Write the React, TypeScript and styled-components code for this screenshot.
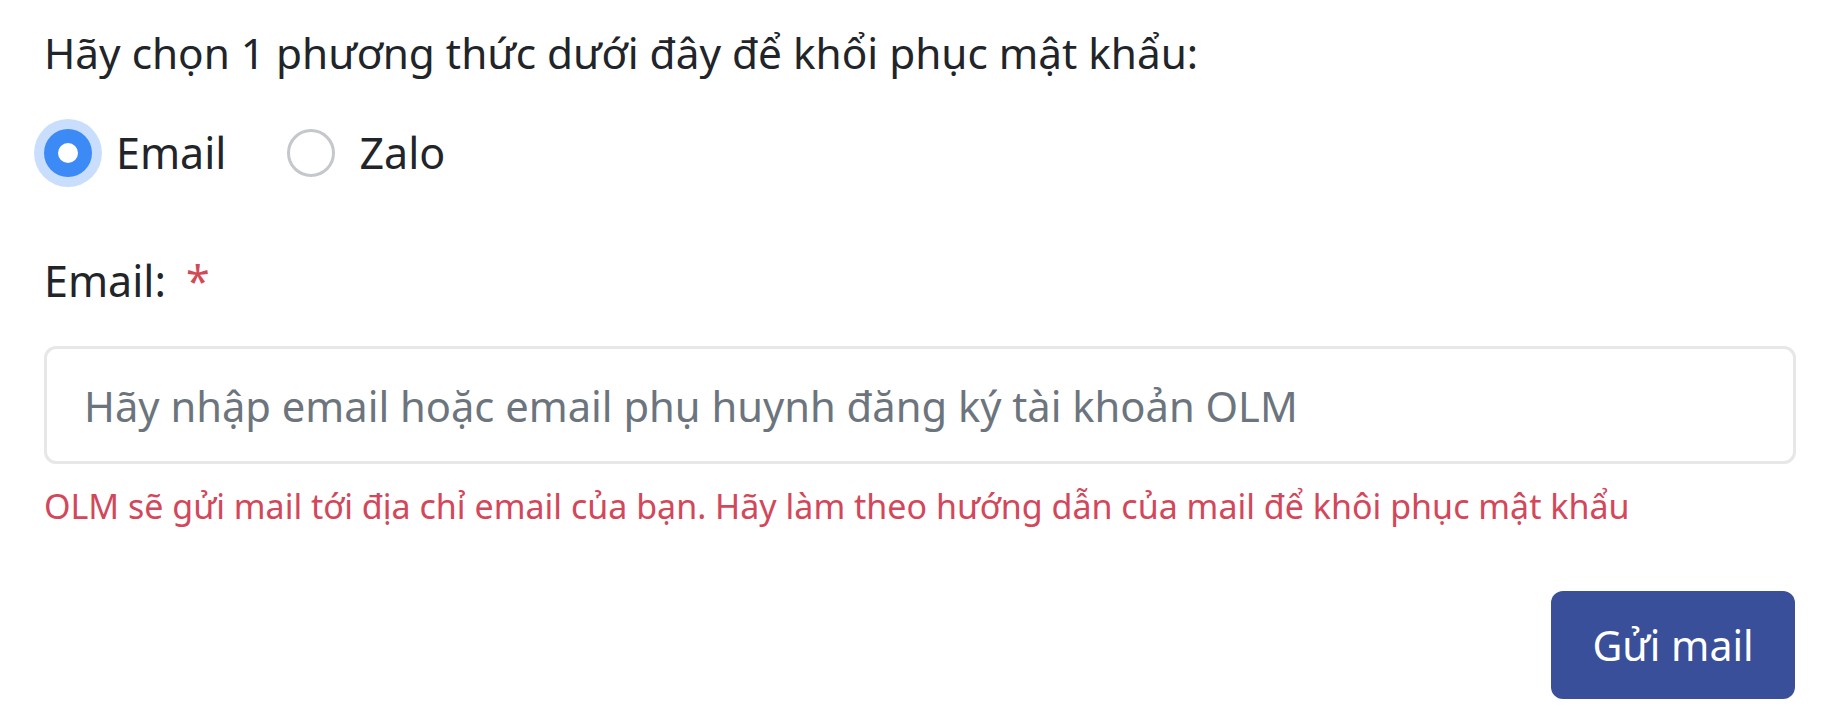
import React from "react";
import styled, { createGlobalStyle } from "styled-components";

const GlobalStyle = createGlobalStyle`
  html, body { margin: 0; padding: 0; background: #ffffff; }
  body {
    font-family: "Noto Sans", "Open Sans", sans-serif;
    color: #212529;
  }
  * { box-sizing: border-box; }
`;

const Wrapper = styled.div`
  padding: 18px 42px 0 44px;
  display: flex;
  flex-direction: column;
`;

const Prompt = styled.p`
  margin: 0;
  font-size: 42.3px;
  line-height: 69px;
  color: #212529;
`;

const RadioGroup = styled.div`
  display: flex;
  align-items: center;
  gap: 61px;
  margin-top: 31px;
  height: 69px;
`;

const RadioOption = styled.label`
  display: flex;
  align-items: center;
  gap: 24px;
  font-size: 43px;
  line-height: 69px;
  color: #212529;
  cursor: pointer;
`;

const RadioCircle = styled.span<{ $checked?: boolean }>`
  width: 48px;
  height: 48px;
  border-radius: 50%;
  flex: none;
  position: relative;
  background: ${(p) => (p.$checked ? "#3c8af6" : "#ffffff")};
  border: ${(p) => (p.$checked ? "none" : "3px solid #c4c7cc")};
  box-shadow: ${(p) =>
    p.$checked ? "0 0 0 10px rgba(60, 138, 246, 0.28)" : "none"};
  &::after {
    content: "";
    display: ${(p) => (p.$checked ? "block" : "none")};
    position: absolute;
    left: 50%;
    top: 50%;
    width: 20px;
    height: 20px;
    margin: -10px 0 0 -10px;
    border-radius: 50%;
    background: #ffffff;
  }
`;

const FieldLabel = styled.div`
  margin-top: 59px;
  font-size: 43px;
  line-height: 69px;
  color: #212529;
  display: flex;
  gap: 20px;
`;

const Required = styled.span`
  color: #d24a55;
`;

const TextInput = styled.input`
  margin-top: 31px;
  width: 100%;
  height: 118px;
  border: 3px solid #e7e7e7;
  border-radius: 12px;
  padding: 0 37px;
  font-family: inherit;
  font-size: 41.7px;
  color: #212529;
  outline: none;
  &::placeholder {
    color: #6c757d;
  }
`;

const HelpText = styled.div`
  margin-top: 15px;
  font-size: 34px;
  line-height: 55px;
  color: #d3475a;
`;

const Actions = styled.div`
  margin-top: 57px;
  display: flex;
  justify-content: flex-end;
  padding-right: 1px;
`;

const SubmitButton = styled.button`
  height: 108px;
  width: 244px;
  padding: 0;
  border: none;
  border-radius: 12px;
  background: #3a4f9a;
  color: #ffffff;
  font-family: inherit;
  font-size: 41px;
  cursor: pointer;
`;

export default function App() {
  return (
    <>
      <GlobalStyle />
      <Wrapper>
        <Prompt>Hãy chọn 1 phương thức dưới đây để khổi phục mật khẩu:</Prompt>
        <RadioGroup>
          <RadioOption>
            <RadioCircle $checked />
            Email
          </RadioOption>
          <RadioOption>
            <RadioCircle />
            Zalo
          </RadioOption>
        </RadioGroup>
        <FieldLabel>
          Email: <Required>*</Required>
        </FieldLabel>
        <TextInput placeholder="Hãy nhập email hoặc email phụ huynh đăng ký tài khoản OLM" />
        <HelpText>
          OLM sẽ gửi mail tới địa chỉ email của bạn. Hãy làm theo hướng dẫn của mail để khôi phục mật khẩu
        </HelpText>
        <Actions>
          <SubmitButton>Gửi mail</SubmitButton>
        </Actions>
      </Wrapper>
    </>
  );
}
